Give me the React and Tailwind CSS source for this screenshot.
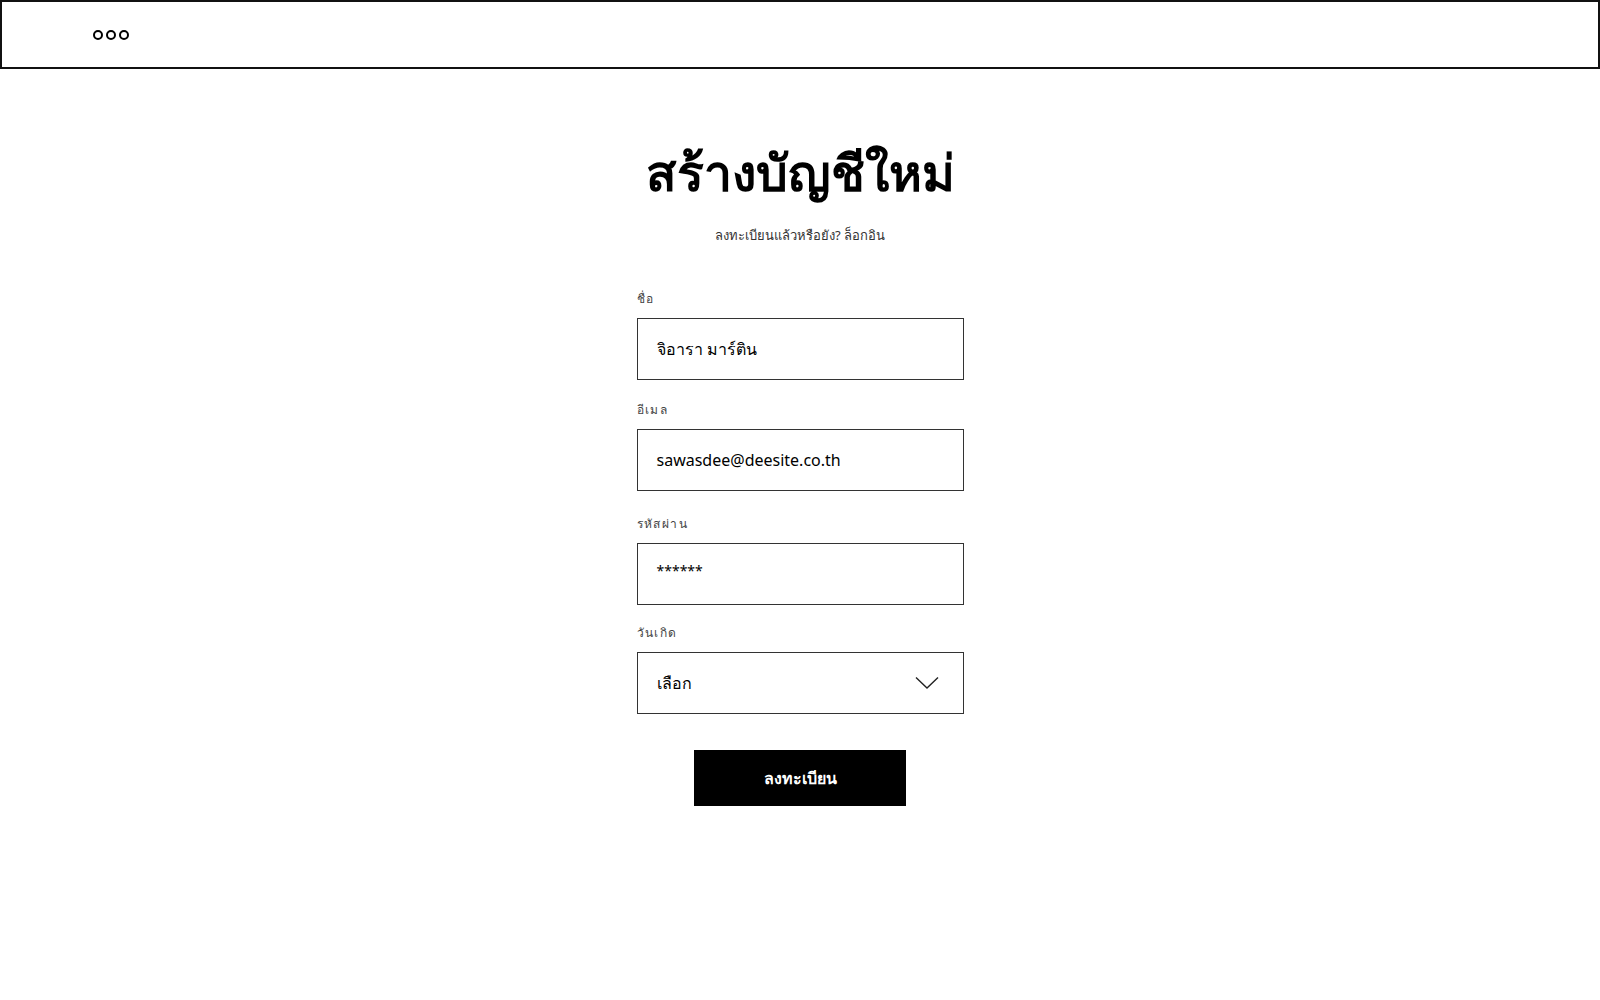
const font = { fontFamily: '"Noto Sans", "Liberation Sans", sans-serif' }

function Field({ label, className = '', children }) {
  return (
    <div className={`flex flex-col ${className}`}>
      <label className="text-[12px] leading-[18px] tracking-[0.12em] text-[#444] mb-[10px]">{label}</label>
      {children}
    </div>
  )
}

function App() {
  return (
    <div className="min-h-screen bg-white text-black" style={font}>
      {/* Header */}
      <header className="h-[69px] border-2 border-[#111] flex items-center pl-[91px] pt-[1px]">
        <div className="flex gap-[3px]">
          <span className="w-[10px] h-[10px] rounded-full border-2 border-black" />
          <span className="w-[10px] h-[10px] rounded-full border-2 border-black" />
          <span className="w-[10px] h-[10px] rounded-full border-2 border-black" />
        </div>
      </header>

      <main className="flex flex-col items-center pt-[71px]">
        <h1 className="text-[50px] leading-[64px] font-semibold">สร้างบัญชีใหม่</h1>
        <p className="mt-[21px] text-[13px] leading-[20px] text-[#333]">ลงทะเบียนแล้วหรือยัง? ล็อกอิน</p>

        <form className="w-[327px] mt-[45px] flex flex-col gap-[21px]" onSubmit={(e) => e.preventDefault()}>
          <Field label="ชื่อ">
            <div className="h-[62px] border border-[#333] flex items-center px-[19px] text-[16px]">จิอารา มาร์ติน</div>
          </Field>
          <Field label="อีเมล">
            <div className="h-[62px] border border-[#333] flex items-center px-[19px] text-[16px]">sawasdee@deesite.co.th</div>
          </Field>
          <Field label="รหัสผ่าน" className="mt-[3px]">
            <div className="h-[62px] border border-[#333] flex items-center px-[19px] text-[14px] pb-[8px]">******</div>
          </Field>
          <Field label="วันเกิด" className="-mt-[2px]">
            <div className="h-[62px] border border-[#333] flex items-center justify-between pl-[19px] pr-[24px] text-[16px]">
              <span>เลือก</span>
              <svg width="24" height="14" viewBox="0 0 24 14" fill="none" stroke="#222" strokeWidth="1.4">
                <path d="M1 1.5 L12 12 L23 1.5" />
              </svg>
            </div>
          </Field>
          <div className="flex justify-center mt-[15px]">
            <button type="submit" className="w-[212px] h-[56px] bg-black text-white text-[16px] font-bold">ลงทะเบียน</button>
          </div>
        </form>
      </main>
    </div>
  )
}

export default App
